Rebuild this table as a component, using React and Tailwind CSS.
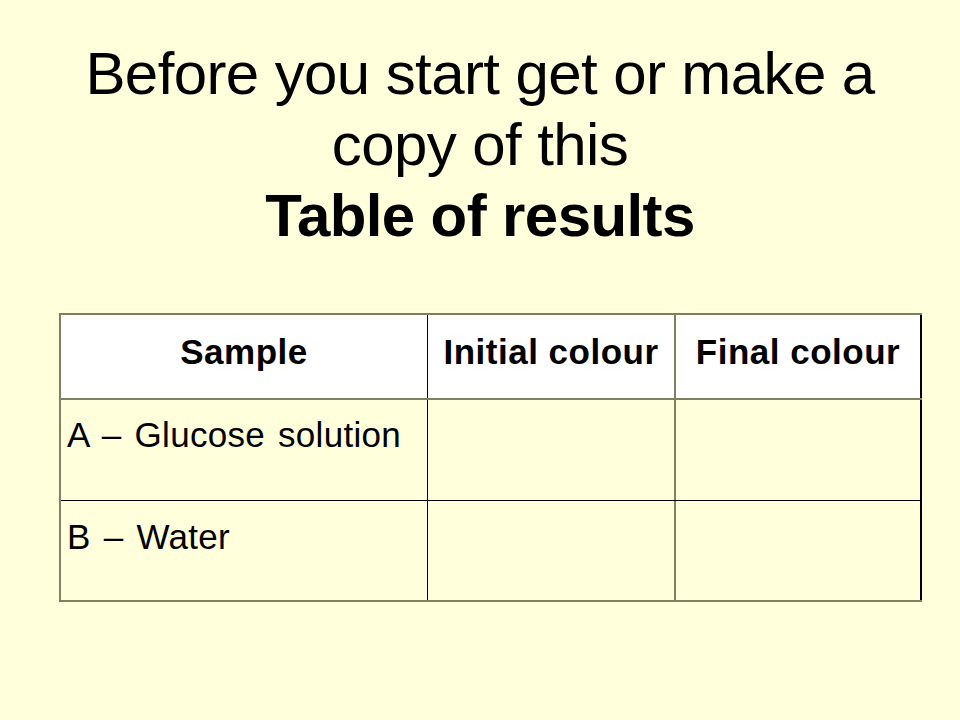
export default function App() {
  return (
    <div className="w-[960px] h-[720px] bg-[#FFFFDC] text-black overflow-hidden font-['Liberation_Sans']">
      <div className="pt-[38px] text-center text-[60px] leading-[71px] tracking-[-0.6px]">
        <div>Before you start get or make a</div>
        <div>copy of this</div>
        <div className="font-bold">Table of results</div>
      </div>
      <div className="ml-[59px] mt-[62px] w-[863px] border-t-2 border-l-2 border-[#7f7f62] text-[35px] leading-[41px]">
        <div className="flex h-[85px] bg-white border-b-2 border-[#7f7f62] font-bold tracking-[0.5px]">
          <div className="w-[367px] border-r border-black text-center pt-[16px]">Sample</div>
          <div className="w-[248px] border-r-2 border-[#7f7f62] text-center pt-[16px]">Initial colour</div>
          <div className="flex-1 border-r-2 border-black text-center pt-[16px]">Final colour</div>
        </div>
        <div className="flex h-[101px] border-b border-black tracking-[0.3px] [word-spacing:3px]">
          <div className="w-[367px] border-r border-black pl-[6px] pt-[14px]">A – Glucose solution</div>
          <div className="w-[248px] border-r-2 border-[#7f7f62]"></div>
          <div className="flex-1 border-r-2 border-black"></div>
        </div>
        <div className="flex h-[101px] border-b-2 border-[#7f7f62] tracking-[0.3px] [word-spacing:3px]">
          <div className="w-[367px] border-r border-black pl-[6px] pt-[15px]">B – Water</div>
          <div className="w-[248px] border-r-2 border-[#7f7f62]"></div>
          <div className="flex-1 border-r-2 border-black"></div>
        </div>
      </div>
    </div>
  );
}
